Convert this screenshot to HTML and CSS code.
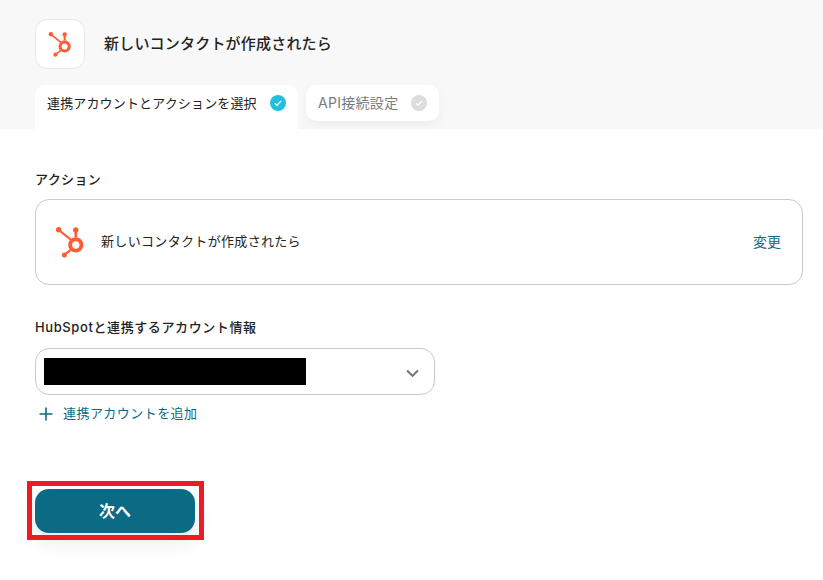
FILE: index.html
```html
<!DOCTYPE html>
<html lang="ja">
<head>
    <meta charset="UTF-8">
    <title>新しいコンタクトが作成されたら</title>
    <link rel="stylesheet" href="styles.css">
</head>
<body>
    <header class="top">
        <div class="top-title">
            <div class="logo-box">
                <svg class="logo-small" viewBox="2 2.5 26 28.5"><use href="#hubspot"></use></svg>
            </div>
            <h1>新しいコンタクトが作成されたら</h1>
        </div>
        <div class="tabs">
            <div class="tab tab-active">
                <span>連携アカウントとアクションを選択</span>
                <svg class="check" viewBox="0 0 16 16">
                    <circle cx="8" cy="8" r="8" fill="#1fc0dc"></circle>
                    <path d="M4.8 8.2l2.2 2.1 4.2-4.4" fill="none" stroke="#fff" stroke-width="1.3"></path>
                </svg>
            </div>
            <div class="tab tab-idle">
                <span>API接続設定</span>
                <svg class="check" viewBox="0 0 16 16">
                    <circle cx="8" cy="8" r="8" fill="#dcdcdc"></circle>
                    <path d="M4.8 8.2l2.2 2.1 4.2-4.4" fill="none" stroke="#fff" stroke-width="1.3"></path>
                </svg>
            </div>
        </div>
    </header>

    <main class="content">
        <h2 class="field-label">アクション</h2>
        <div class="action-card">
            <svg class="logo-large" viewBox="2 2.5 26 28.5">
                <g id="hubspot" fill="none" stroke="#ff5c35">
                    <circle cx="20.3" cy="19" r="5.2" stroke-width="3.6"></circle>
                    <path d="M5 5.5L16.3 14.6" stroke-width="2"></path>
                    <path d="M20.3 12V6" stroke-width="2.4"></path>
                    <path d="M16 23.4L10 28" stroke-width="2"></path>
                    <circle cx="4.6" cy="5" r="2.5" fill="#ff5c35" stroke="none"></circle>
                    <circle cx="20.3" cy="5.2" r="2.5" fill="#ff5c35" stroke="none"></circle>
                    <circle cx="9.8" cy="28.3" r="2.3" fill="#ff5c35" stroke="none"></circle>
                </g>
            </svg>
            <span class="action-name">新しいコンタクトが作成されたら</span>
            <a class="change-link" href="#">変更</a>
        </div>

        <h2 class="field-label field-label-account">HubSpotと連携するアカウント情報</h2>
        <div class="select-box">
            <div class="redacted"></div>
            <svg class="chevron" viewBox="0 0 12 8">
                <path d="M1 1.2l5 5 5-5" fill="none" stroke="#757575" stroke-width="1.9"></path>
            </svg>
        </div>
        <a class="add-link" href="#">
            <svg class="plus" viewBox="0 0 14 14">
                <path d="M7 0.5v13M0.5 7h13" fill="none" stroke="#0b6a84" stroke-width="1.6"></path>
            </svg>
            <span>連携アカウントを追加</span>
        </a>

        <div class="actions">
            <button class="next-btn">次へ</button>
            <div class="highlight"></div>
        </div>
    </main>
</body>
</html>
```

FILE: styles.css
```css
body {
    font-family: Inter, "Noto Sans CJK JP", "Noto Sans", sans-serif;
    margin: 0;
    padding: 0;
    min-height: 100vh;
    background-color: #fff;
    color: #222;
}

.top {
    background: #f8f8f8;
    padding: 19px 35px 0;
}

.top-title {
    display: flex;
    align-items: center;
    gap: 19px;
}

.top-title h1 {
    font-size: 15px;
    font-weight: 500;
    letter-spacing: 0.2px;
    line-height: 20px;
    margin: 0;
}

.logo-box {
    width: 48px;
    height: 48px;
    background: #fff;
    border: 1px solid #e6e6e6;
    border-radius: 12px;
    display: flex;
    align-items: center;
    justify-content: center;
}

.logo-small {
    width: 24px;
    height: 25px;
}

.tabs {
    display: flex;
    align-items: flex-start;
    gap: 8px;
    margin-top: 16px;
    height: 44px;
}

.tab {
    display: flex;
    align-items: center;
    background: #fff;
    font-size: 13px;
    letter-spacing: 0.15px;
    height: 36px;
    white-space: nowrap;
}

.tab span {
    margin-top: -2px;
}

.tab-active {
    width: 263px;
    height: 44px;
    box-sizing: border-box;
    padding: 0 12px 8px;
    justify-content: space-between;
    border-radius: 10px 10px 0 0;
}

.tab-idle {
    width: 133px;
    box-sizing: border-box;
    padding: 0 12px;
    justify-content: space-between;
    border-radius: 10px;
    color: #7b7b7b;
    font-size: 14px;
    letter-spacing: 0.3px;
    box-shadow: 0 4px 10px rgba(0, 0, 0, 0.05);
}

.check {
    width: 16px;
    height: 16px;
}

.content {
    padding: 0 20px 0 35px;
}

.field-label {
    font-size: 13px;
    font-weight: 500;
    letter-spacing: 0.35px;
    line-height: 20px;
    margin: 40px 0 10px;
}

.field-label-account {
    letter-spacing: 0.6px;
    margin: 32px 0 11px;
}

.action-card {
    display: flex;
    align-items: center;
    box-sizing: border-box;
    height: 86px;
    padding: 0 21px 0 19px;
    border: 1px solid #c9c9c9;
    border-radius: 14px;
}

.logo-large {
    width: 30px;
    height: 31px;
}

.action-name {
    font-size: 13px;
    letter-spacing: 0.33px;
    margin: -3px 0 0 16px;
    flex-grow: 1;
}

.change-link {
    color: #0b6a84;
    font-size: 14px;
    margin-top: -3px;
    text-decoration: none;
}

.select-box {
    display: flex;
    align-items: center;
    justify-content: space-between;
    box-sizing: border-box;
    width: 400px;
    height: 47px;
    padding: 0 15px 0 8px;
    border: 1px solid #c9c9c9;
    border-radius: 14px;
}

.redacted {
    width: 262px;
    height: 27px;
    background: #000;
}

.chevron {
    width: 13px;
    height: 9px;
    margin-top: 3px;
}

.add-link {
    display: flex;
    align-items: center;
    gap: 10px;
    margin: 8px 0 0 4px;
    color: #0b6a84;
    font-size: 13px;
    letter-spacing: 0.45px;
    line-height: 20px;
    text-decoration: none;
}

.plus {
    width: 14px;
    height: 14px;
    margin-top: 2px;
}

.actions {
    position: relative;
    margin-top: 66px;
    width: 160px;
}

.next-btn {
    display: block;
    width: 160px;
    height: 44px;
    padding: 0 0 3px;
    background: #0b6a84;
    color: #fff;
    border: none;
    border-radius: 14px;
    font-family: inherit;
    font-size: 16px;
    font-weight: 700;
    box-shadow: 0 8px 20px rgba(40, 60, 90, 0.12);
}

.highlight {
    position: absolute;
    top: -8px;
    left: -8px;
    width: 167px;
    height: 49px;
    border: 5px solid #ed1c24;
}
```
